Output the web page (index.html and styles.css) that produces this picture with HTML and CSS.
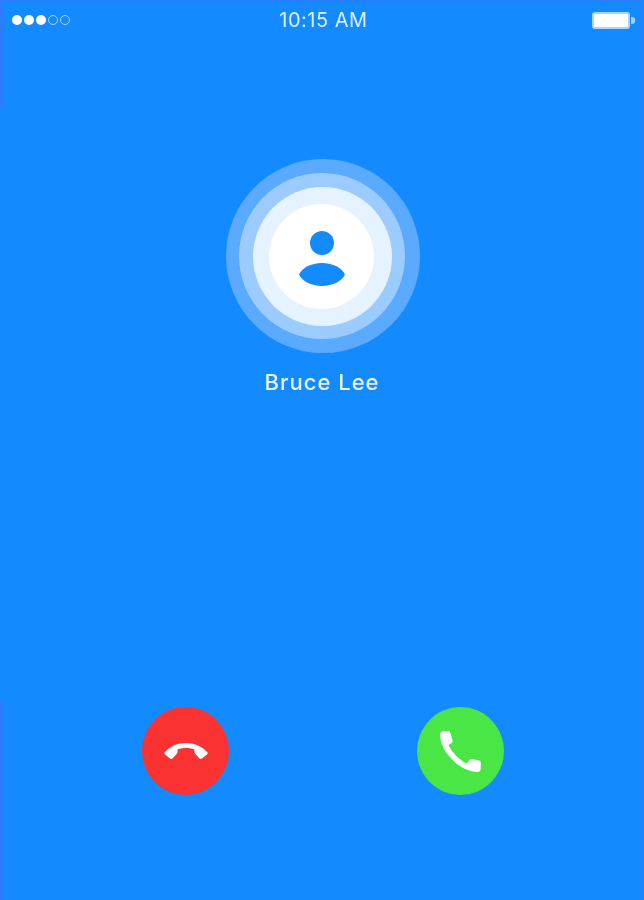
FILE: index.html
```html
<!DOCTYPE html>
<html lang="en">
<head>
<meta charset="utf-8">
<title>Incoming call</title>
<link rel="stylesheet" href="styles.css">
</head>
<body>
<div class="screen">
  <i class="edge edge-top"></i>
  <i class="edge edge-left-a"></i>
  <i class="edge edge-left-b"></i>
  <i class="edge edge-right"></i>
  <header class="status">
    <div class="signal">
      <span class="dot"></span><span class="dot"></span><span class="dot"></span>
      <span class="dot dot-empty"></span><span class="dot dot-empty"></span>
    </div>
    <div class="time">10:15 AM</div>
    <div class="battery"><span class="battery-body"></span><span class="battery-nub"></span></div>
  </header>
  <main class="caller">
    <div class="ring ring-1"><div class="ring ring-2"><div class="ring ring-3"><div class="ring ring-4">
      <svg class="avatar" viewBox="0 0 46 55" aria-hidden="true">
        <circle cx="23" cy="12" r="12"/>
        <path d="M0 43.500C3 37 12 32 23 32S43 37 46 43.500C43 50 34 55 23 55S3 50 0 43.500Z"/>
      </svg>
    </div></div></div></div>
    <div class="name">Bruce Lee</div>
  </main>
  <footer class="actions">
    <button class="call call-decline" aria-label="Decline">
      <svg class="icon-decline" viewBox="0 0 44 16" aria-hidden="true">
        <path d="M.5 9.500C6 3 14 0 22 0S38 3 43.500 9.500Q44 10.500 43 11.500L38 15.500Q36.500 16.500 35 15L31 10.500Q30 9 30.500 6.500C27 4.500 17 4.500 13.500 6.500Q14 9 13 10.500L9 15Q7.500 16.500 6 15.500L1 11.500Q0 10.500.5 9.500Z"/>
      </svg>
    </button>
    <button class="call call-accept" aria-label="Accept">
      <svg class="icon-accept" viewBox="0 0 41 41" aria-hidden="true">
        <path d="M2 .5L8 0Q10 0 10.500 2L12.500 9Q13 11 11.500 12L8.500 14C11 20 19 29 27 32.500L29.500 29Q30.500 27.500 32.500 28L39 29.500Q41 30 41 32L40.500 39Q40 41 38 41C20 41 0 21 0 3Q0 1 2 .5Z"/>
      </svg>
    </button>
  </footer>
</div>
</body>
</html>
```

FILE: styles.css
```css
* { box-sizing: border-box; }
html, body { margin: 0; height: 100%; }
body { background: #138bff; font-family: "Inter", "Liberation Sans", sans-serif; }

.screen {
  position: relative;
  width: 644px;
  height: 900px;
  overflow: hidden;
  background: #138bff;
  display: flex;
  flex-direction: column;
}

.edge { position: absolute; background: #2b7dff; }
.edge-top { left: 0; right: 0; top: 0; height: 2px; }
.edge-left-a { left: 0; top: 0; width: 3px; height: 110px; }
.edge-left-b { left: 0; top: 702px; bottom: 0; width: 3px; }
.edge-right { right: 0; top: 0; bottom: 0; width: 3px; }

.status {
  height: 40px;
  padding: 0 9px 0 12px;
  display: grid;
  grid-template-columns: 1fr auto 1fr;
  align-items: center;
  filter: blur(.6px);
}
.signal { display: flex; gap: 3px; }
.dot { width: 10px; height: 10px; margin-right: -1px; border-radius: 50%; background: #fff; }
.dot-empty { background: none; border: 1px solid #a9d4ff; }
.time { color: #dcefff; font-size: 20px; font-weight: 400; letter-spacing: .5px; line-height: 1; }
.battery { justify-self: end; display: flex; align-items: center; }
.battery-body { width: 38px; height: 17px; background: #fff; border: 2px solid #a8d4ff; border-radius: 3px; }
.battery-nub { width: 4px; height: 7px; margin-left: 1px; background: #a8d4ff; border-radius: 0 3px 3px 0; }

.caller {
  flex: 1;
  padding-top: 119px;
  display: flex;
  flex-direction: column;
  align-items: center;
  filter: blur(.6px);
}
.ring { border-radius: 50%; display: flex; align-items: center; justify-content: center; }
.ring-1 { width: 194px; height: 194px; margin-left: 2px; background: #5aaaff; }
.ring-2 { width: 166px; height: 166px; margin-right: 2px; background: #9bcbff; }
.ring-3 { width: 139px; height: 139px; background: #e5f2ff; }
.ring-4 { width: 105px; height: 105px; margin-right: 1px; background: #fff; }
.avatar { width: 46px; height: 55px; margin-top: 5px; fill: #138bff; }
.name { margin-top: 16px; color: #e6f3ff; font-size: 22px; font-weight: 500; line-height: 26px; letter-spacing: 1px; }

.actions {
  height: 193px;
  padding-left: 142px;
  display: flex;
  align-items: flex-start;
  gap: 188px;
}
.call {
  width: 87px;
  height: 88px;
  padding: 0;
  border: 0;
  border-radius: 50%;
  display: flex;
  align-items: center;
  justify-content: center;
  filter: blur(.6px);
}
.call-decline { background: #fb3232; }
.call-accept { background: #4ae645; }
.call svg { fill: #fff; display: block; }
.icon-decline { width: 44px; height: 16px; }
.icon-accept { width: 41px; height: 41px; }
```
